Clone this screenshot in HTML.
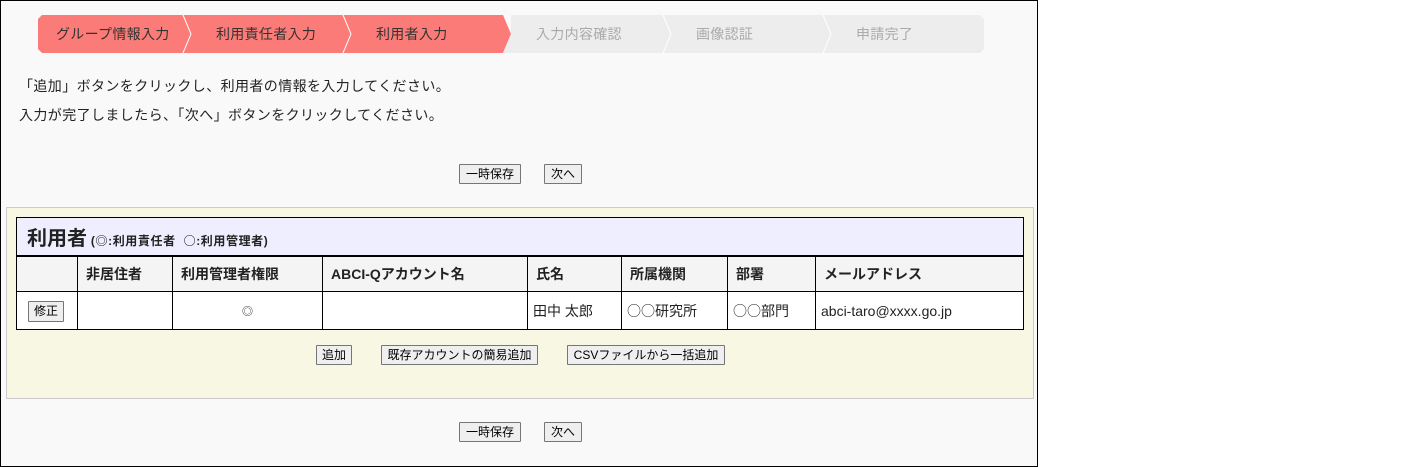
<!DOCTYPE html>
<html><head><meta charset="utf-8"><style>
*{margin:0;padding:0;box-sizing:border-box}
body{width:1405px;height:467px;background:#fff;font-family:"Liberation Sans","Noto Sans CJK JP",sans-serif;font-size:14px;color:#222;position:relative;overflow:hidden}
#page{position:absolute;left:0;top:0;width:1038px;height:467px;background:#f9f9f9}
#frame{position:absolute;left:0;top:0;width:1038px;height:467px;border:1px solid #000;pointer-events:none}
.abs{position:absolute}
.jp{font-family:"Noto Sans CJK JP",sans-serif}
.btn{position:absolute;height:20px;border:1px solid #767676;background:#efefef;font-size:12px;line-height:18px;text-align:center;color:#000;border-radius:1px}
.st{position:absolute;top:15px;height:38px;line-height:38px;font-size:14px;letter-spacing:0.3px}
#box{position:absolute;left:6px;top:207px;width:1028px;height:192px;background:#f8f7e4;border:1px solid #ccc}
table{position:absolute;left:16px;top:217px;width:1008px;border-collapse:collapse}
td,th{border:1px solid #000;font-size:14px;text-align:left;padding:0 8px}
th{background:#f4f4f4;height:36px;font-weight:bold}
</style></head><body>
<div id="page">
<svg class="abs" style="left:0;top:0" width="1000" height="60">
<polygon points="42,15 183,15 191,34 183,53 42,53 38,49 38,19" fill="#fa7b77"/>
<polygon points="183,15 343,15 351,34 343,53 183,53 191,34" fill="#fa7b77"/>
<polygon points="343,15 503,15 511,34 503,53 343,53 351,34" fill="#fa7b77"/>
<polygon points="511,15 663,15 671,34 663,53 503,53 511,34" fill="#ededed"/>
<polygon points="663,15 823,15 831,34 823,53 663,53 671,34" fill="#ededed"/>
<polygon points="823,15 980,15 984,19 984,49 980,53 823,53 831,34" fill="#ededed"/>
<polyline points="183,15 191,34 183,53" fill="none" stroke="#fff" stroke-width="1"/>
<polyline points="343,15 351,34 343,53" fill="none" stroke="#fff" stroke-width="1"/>
<polyline points="663,15 671,34 663,53" fill="none" stroke="#fff" stroke-width="1"/>
<polyline points="823,15 831,34 823,53" fill="none" stroke="#fff" stroke-width="1"/>
</svg>
<div class="st" style="left:56px;color:#333">グループ情報入力</div>
<div class="st" style="left:216px;color:#333">利用責任者入力</div>
<div class="st" style="left:376px;color:#333">利用者入力</div>
<div class="st" style="left:536px;color:#aaa">入力内容確認</div>
<div class="st" style="left:696px;color:#aaa">画像認証</div>
<div class="st" style="left:856px;color:#aaa">申請完了</div>
<div class="abs" style="left:19px;top:77px;line-height:18px;letter-spacing:0.4px">「追加」ボタンをクリックし、利用者の情報を入力してください。</div>
<div class="abs" style="left:19px;top:106px;line-height:18px;letter-spacing:0.4px">入力が完了しましたら、「次へ」ボタンをクリックしてください。</div>
<div class="btn" style="left:459px;top:164px;width:62px">一時保存</div>
<div class="btn" style="left:544px;top:164px;width:38px">次へ</div>
<div id="box"></div>
<table>
<tr><td colspan="8" style="background:#eeeeff;height:38px;border-bottom:2px solid #000;padding-left:10px"><b style="font-size:20px">利用者</b> <b style="font-size:12px;letter-spacing:0.6px">(<span class="jp">◎</span>:利用責任者&nbsp; <span class="jp">○</span>:利用管理者)</b></td></tr>
<tr><th style="width:61px"></th><th style="width:95px">非居住者</th><th style="width:150px">利用管理者権限</th><th style="width:205px">ABCI-Qアカウント名</th><th style="width:94px">氏名</th><th style="width:106px">所属機関</th><th style="width:88px">部署</th><th>メールアドレス</th></tr>
<tr style="height:38px;background:#fff"><td></td><td></td><td class="jp" style="text-align:center;font-size:11px">◎</td><td></td><td style="padding-left:5px">田中 太郎</td><td style="padding-left:5px"><span class="jp">○○</span>研究所</td><td style="padding-left:5px"><span class="jp">○○</span>部門</td><td style="padding-left:5px">abci-taro@xxxx.go.jp</td></tr>
</table>
<div class="btn" style="left:28px;top:301px;width:36px;height:21px">修正</div>
<div class="btn" style="left:316px;top:345px;width:36px">追加</div>
<div class="btn" style="left:381px;top:345px;width:157px">既存アカウントの簡易追加</div>
<div class="btn" style="left:567px;top:345px;width:158px">CSVファイルから一括追加</div>
<div class="btn" style="left:459px;top:422px;width:62px">一時保存</div>
<div class="btn" style="left:544px;top:422px;width:38px">次へ</div>
</div>
<div id="frame"></div>
</body></html>
